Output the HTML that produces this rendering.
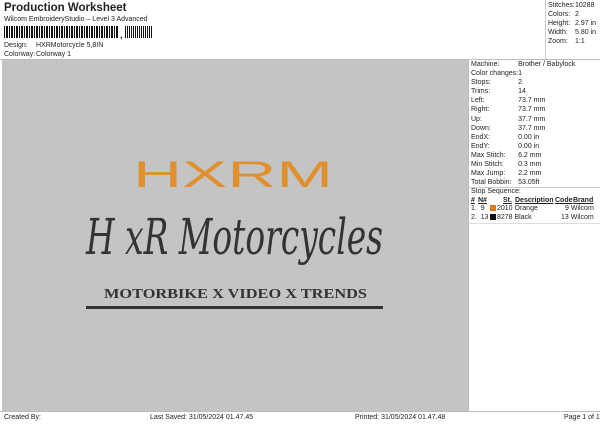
<html><head><style>
body{margin:0;width:600px;height:424px;background:#fff;font-family:"Liberation Sans",sans-serif;color:#222;position:relative;overflow:hidden}
.a{position:absolute;font-size:7px;white-space:nowrap;line-height:9px}
.r td{padding:0;font-size:7px;line-height:9.1px;white-space:nowrap}
</style></head><body>
<div class="a" style="left:4px;top:2px;font-size:11.5px;font-weight:bold;line-height:13px">Production Worksheet</div>
<div class="a" style="left:4px;top:15px">Wilcom EmbroideryStudio – Level 3 Advanced</div>
<div style="position:absolute;left:4px;top:26px;width:115px;height:12px;background:repeating-linear-gradient(90deg,#111 0 1px,#fff 1px 2px,#111 2px 4px,#fff 4px 5px)"></div>
<div class="a" style="left:120px;top:31px;font-size:9px;font-weight:bold">,</div>
<div style="position:absolute;left:125px;top:26px;width:28px;height:12px;background:repeating-linear-gradient(90deg,#111 0 1px,#fff 1px 2px,#111 2px 3px,#fff 3px 4px)"></div>
<div class="a" style="left:4px;top:41px">Design:</div><div class="a" style="left:36px;top:41px">HXRMotorcycle 5,8IN</div>
<div class="a" style="left:4px;top:50px">Colorway:</div><div class="a" style="left:36px;top:50px">Colorway 1</div>
<div style="position:absolute;left:0;top:59px;width:600px;height:1px;background:#bbb"></div>
<div style="position:absolute;left:545px;top:0;width:1px;height:59px;background:#ccc"></div>
<div style="position:absolute;left:2px;top:60px;width:466px;height:351px;background:#c4c4c4"></div>
<div style="position:absolute;left:468px;top:60px;width:1px;height:351px;background:#bbb"></div>
<table class="r" style="position:absolute;left:548px;top:1px;border-collapse:collapse">
<tr><td style="width:27px">Stitches:</td><td>10288</td></tr><tr><td>Colors:</td><td>2</td></tr><tr><td>Height:</td><td>2.97 in</td></tr><tr><td>Width:</td><td>5.80 in</td></tr><tr><td>Zoom:</td><td>1:1</td></tr></table>
<table class="r" style="position:absolute;left:471px;top:60px;border-collapse:collapse">
<tr><td style="width:47px">Machine:</td><td>Brother / Babylock</td></tr><tr><td>Color changes:</td><td>1</td></tr><tr><td>Stops:</td><td>2</td></tr><tr><td>Trims:</td><td>14</td></tr><tr><td>Left:</td><td>73.7 mm</td></tr><tr><td>Right:</td><td>73.7 mm</td></tr><tr><td>Up:</td><td>37.7 mm</td></tr><tr><td>Down:</td><td>37.7 mm</td></tr><tr><td>EndX:</td><td>0.00 in</td></tr><tr><td>EndY:</td><td>0.00 in</td></tr><tr><td>Max Stitch:</td><td>6.2 mm</td></tr><tr><td>Min Stitch:</td><td>0.3 mm</td></tr><tr><td>Max Jump:</td><td>2.2 mm</td></tr><tr><td>Total Bobbin:</td><td>53.05ft</td></tr></table>
<div style="position:absolute;left:469px;top:187px;width:131px;height:1px;background:#ccc"></div>
<div class="a" style="left:471px;top:187px">Stop Sequence:</div>
<div class="a" style="left:471px;top:196px;font-weight:bold;text-decoration:underline">#</div>
<div class="a" style="left:478px;top:196px;font-weight:bold;text-decoration:underline">N#</div>
<div class="a" style="left:503px;top:196px;font-weight:bold;text-decoration:underline">St.</div>
<div class="a" style="left:515px;top:196px;font-weight:bold;text-decoration:underline">Description</div>
<div class="a" style="left:555px;top:196px;font-weight:bold;text-decoration:underline">Code</div>
<div class="a" style="left:573px;top:196px;font-weight:bold;text-decoration:underline">Brand</div>
<div class="a" style="left:471px;top:204px">1.&nbsp; 9</div><div style="position:absolute;left:490px;top:205px;width:6px;height:6px;background:#e07a1a"></div>
<div class="a" style="left:497px;top:204px">2010 Orange</div><div class="a" style="left:565px;top:204px">9 Wilcom</div>
<div class="a" style="left:471px;top:213px">2.&nbsp; 13</div><div style="position:absolute;left:490px;top:214px;width:6px;height:6px;background:#111"></div>
<div class="a" style="left:497px;top:213px">8278 Black</div><div class="a" style="left:561px;top:213px">13 Wilcom</div>
<div style="position:absolute;left:469px;top:223px;width:131px;height:1px;background:#ddd"></div>
<div style="position:absolute;left:0;top:411px;width:600px;height:1px;background:#bbb"></div>
<div class="a" style="left:4px;top:413px">Created By:</div>
<div class="a" style="left:150px;top:413px">Last Saved: 31/05/2024 01.47.45</div>
<div class="a" style="left:355px;top:413px">Printed: 31/05/2024 01.47.48</div>
<div class="a" style="left:564px;top:413px">Page 1 of 1</div>
<svg style="position:absolute;left:0;top:0" width="468" height="411">
<text x="133" y="187" font-family="Liberation Sans" font-size="37" fill="#e0902e" textLength="200" lengthAdjust="spacingAndGlyphs">HXRM</text>
<text x="86" y="254" font-family="DejaVu Serif" font-style="italic" font-size="50" fill="#333" textLength="297" lengthAdjust="spacingAndGlyphs">H xR Motorcycles</text>
<text x="104" y="298" font-family="Liberation Serif" font-weight="bold" font-size="14" fill="#333" textLength="263" lengthAdjust="spacingAndGlyphs">MOTORBIKE X VIDEO X TRENDS</text>
</svg>
<div style="position:absolute;left:86px;top:306px;width:297px;height:3px;background:#333"></div>
</body></html>
